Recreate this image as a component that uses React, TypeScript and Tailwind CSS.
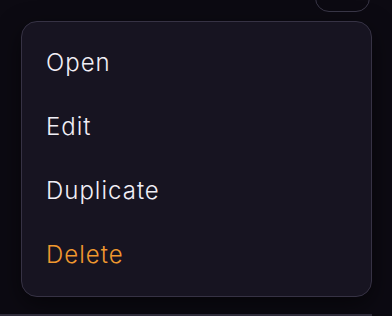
import React from "react";

const items = [
  { label: "Open", danger: false },
  { label: "Edit", danger: false },
  { label: "Duplicate", danger: false },
  { label: "Delete", danger: true },
];

const App = () => {
  return (
    <div className="w-[392px] h-[316px] bg-[#0c0a12] overflow-hidden flex flex-col font-['Inter',sans-serif]">
      <div className="h-[12px] flex justify-end pr-[22px]">
        <div className="w-[55px] h-[40px] -mt-[28px] rounded-[14px] border border-[#3a3748]" />
      </div>
      <div className="mt-[9px] ml-[21px] mr-[20px] h-[276px] rounded-[16px] border border-[#363244] bg-[#171421] shadow-[0_8px_24px_rgba(0,0,0,0.5)] py-[9px] flex flex-col">
        {items.map((item) => (
          <div
            key={item.label}
            className={`h-[64px] flex items-center px-[24px] text-[24px] font-light tracking-[1px] ${
              item.danger ? "text-[#f0982f]" : "text-[#f1eff6]"
            }`}
          >
            {item.label}
          </div>
        ))}
      </div>
      <div className="mt-auto h-[2px] w-[372px] bg-[#2e2b3a]" />
    </div>
  );
};

export default App;
